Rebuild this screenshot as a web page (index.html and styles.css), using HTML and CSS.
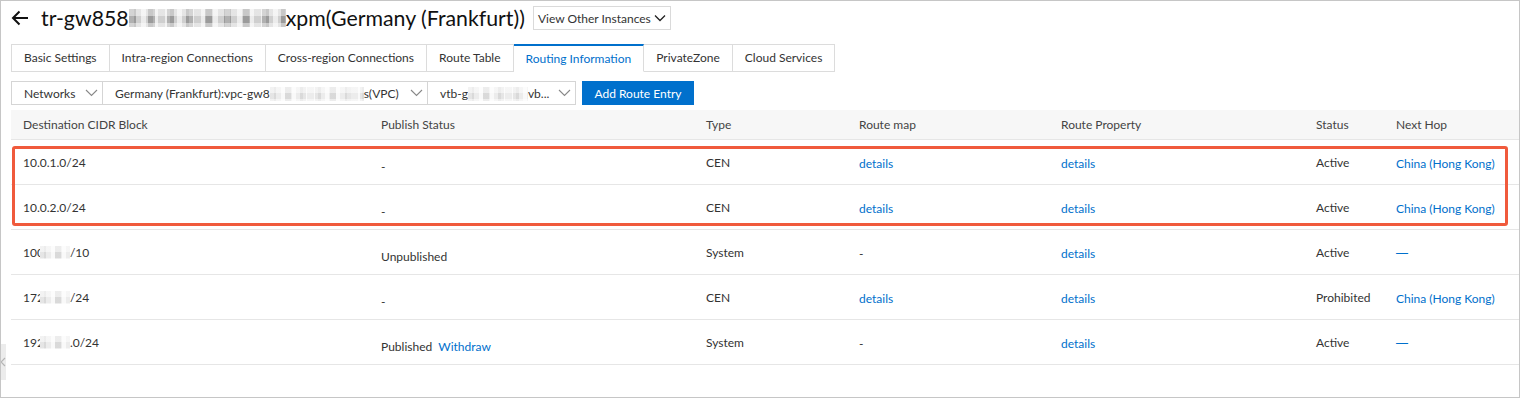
FILE: index.html
```html
<!DOCTYPE html>
<html>
<head>
  <meta charset="UTF-8">
  <meta name="viewport" content="width=device-width, initial-scale=1">
  <link rel="stylesheet" href="styles.css">
</head>
<body>
  <div class="frame">
    <div class="head">
      <svg class="back" width="18" height="16" viewBox="0 0 18 16"><path d="M17 8H2M8.5 1.5L2 8l6.5 6.5" fill="none" stroke="#111" stroke-width="2"/></svg>
      <h1 class="title">tr-gw858<span class="blur blur-title"></span>xpm(Germany (Frankfurt))</h1>
      <div class="switch">View Other Instances
        <svg width="12" height="8" viewBox="0 0 12 8"><polyline points="1,1.5 6,6.5 11,1.5" fill="none" stroke="#222" stroke-width="1.3"/></svg>
      </div>
    </div>

    <div class="tabs">
      <div class="tab">Basic Settings</div>
      <div class="tab">Intra-region Connections</div>
      <div class="tab">Cross-region Connections</div>
      <div class="tab">Route Table</div>
      <div class="tab active">Routing Information</div>
      <div class="tab">PrivateZone</div>
      <div class="tab">Cloud Services</div>
    </div>

    <div class="toolbar">
      <div class="select sel-net">
        <span>Networks</span>
        <svg width="13" height="8" viewBox="0 0 13 8"><polyline points="1,1 6.5,6.5 12,1" fill="none" stroke="#888" stroke-width="1.1"/></svg>
      </div>
      <div class="select sel-vpc">
        <span>Germany (Frankfurt):vpc-gw8<span class="blur blur-light blur-sel"></span>s(VPC)</span>
        <svg width="13" height="8" viewBox="0 0 13 8"><polyline points="1,1 6.5,6.5 12,1" fill="none" stroke="#888" stroke-width="1.1"/></svg>
      </div>
      <div class="select sel-vtb">
        <span>vtb-g<span class="blur blur-light blur-vtb"></span>vb...</span>
        <svg width="13" height="8" viewBox="0 0 13 8"><polyline points="1,1 6.5,6.5 12,1" fill="none" stroke="#888" stroke-width="1.1"/></svg>
      </div>
      <button class="add-button">Add Route Entry</button>
    </div>

    <table class="routes">
      <colgroup>
        <col style="width:358px"><col style="width:325px"><col style="width:153px"><col style="width:202px"><col style="width:255px"><col style="width:80px"><col>
      </colgroup>
      <thead>
        <tr>
          <th>Destination CIDR Block</th>
          <th>Publish Status</th>
          <th>Type</th>
          <th>Route map</th>
          <th>Route Property</th>
          <th>Status</th>
          <th>Next Hop</th>
        </tr>
      </thead>
      <tbody>
        <tr>
          <td>10.0.1.0/24</td>
          <td class="pub">-</td>
          <td>CEN</td>
          <td class="lk"><a href="#">details</a></td>
          <td class="lk"><a href="#">details</a></td>
          <td>Active</td>
          <td class="lk"><a href="#">China (Hong Kong)</a></td>
        </tr>
        <tr>
          <td>10.0.2.0/24</td>
          <td class="pub">-</td>
          <td>CEN</td>
          <td class="lk"><a href="#">details</a></td>
          <td class="lk"><a href="#">details</a></td>
          <td>Active</td>
          <td class="lk"><a href="#">China (Hong Kong)</a></td>
        </tr>
        <tr>
          <td>100<span class="blur blur-light blur-cell"></span>/10</td>
          <td class="pub">Unpublished</td>
          <td>System</td>
          <td class="lk">-</td>
          <td class="lk"><a href="#">details</a></td>
          <td>Active</td>
          <td><span class="none">—</span></td>
        </tr>
        <tr>
          <td>172<span class="blur blur-light blur-cell"></span>/24</td>
          <td class="pub">-</td>
          <td>CEN</td>
          <td class="lk"><a href="#">details</a></td>
          <td class="lk"><a href="#">details</a></td>
          <td>Prohibited</td>
          <td class="lk"><a href="#">China (Hong Kong)</a></td>
        </tr>
        <tr>
          <td>192<span class="blur blur-light blur-cell"></span>.0/24</td>
          <td class="pub">Published <a href="#" class="withdraw">Withdraw</a></td>
          <td>System</td>
          <td class="lk">-</td>
          <td class="lk"><a href="#">details</a></td>
          <td>Active</td>
          <td><span class="none">—</span></td>
        </tr>
      </tbody>
    </table>

    <!-- annotation round the two CEN routes -->
    <div class="highlight"></div>
    <div class="side-toggle">
      <svg width="6" height="10" viewBox="0 0 6 10"><polyline points="5,1 1,5 5,9" fill="none" stroke="#b5b5b5" stroke-width="1.2"/></svg>
    </div>
  </div>
</body>
</html>
```

FILE: styles.css
```css
html, body {
  margin: 0;
  padding: 0;
}

body {
  font-family: Lato, "Liberation Sans", sans-serif;
  font-size: 12px;
  color: #333;
}

a {
  color: #0070cc;
  text-decoration: none;
}

.frame {
  position: relative;
  height: 398px;
  box-sizing: border-box;
  border: 1px solid #c6c6c6;
  padding-left: 10px;
  overflow: hidden;
  background-color: #fff;
}

.head {
  display: flex;
  align-items: center;
  height: 34px;
}

.back {
  margin-right: 12px;
}

.title {
  margin: 0;
  font-size: 21.3px;
  font-weight: normal;
  color: #111;
  display: flex;
  align-items: center;
}

.switch {
  display: flex;
  align-items: center;
  gap: 3px;
  height: 22px;
  margin-left: 8px;
  padding: 0 4px;
  border: 1px solid #dadada;
  color: #333;
}

/* pixelated masking used in the screenshot */
.blur {
  display: inline-block;
  background-color: #cfcfcf;
  background-image:
    repeating-linear-gradient(180deg, rgba(255, 255, 255, 0.45) 0 7px, transparent 7px 14px),
    repeating-linear-gradient(90deg, rgba(0, 0, 0, 0.25) 0 7px, transparent 7px 19px),
    repeating-linear-gradient(90deg, rgba(255, 255, 255, 0.6) 0 5px, transparent 5px 12px);
}

.blur-title {
  width: 157px;
  height: 18px;
}

.blur-light {
  background-color: #ececec;
  background-image:
    repeating-linear-gradient(180deg, rgba(255, 255, 255, 0.5) 0 6px, transparent 6px 12px),
    repeating-linear-gradient(90deg, rgba(0, 0, 0, 0.08) 0 6px, transparent 6px 15px),
    repeating-linear-gradient(90deg, rgba(255, 255, 255, 0.7) 0 4px, transparent 4px 11px);
}

.blur-sel {
  width: 94px;
  height: 14px;
  vertical-align: -3px;
}

.blur-vtb {
  width: 60px;
  height: 14px;
  vertical-align: -3px;
}

.blur-cell {
  width: 30px;
  height: 13px;
  margin-left: -4px;
  vertical-align: -2px;
}

.tabs {
  display: flex;
  margin-top: 9px;
}

.tab {
  height: 26px;
  line-height: 26px;
  padding: 0 12px;
  border: 1px solid #dcdcdc;
  border-left: none;
  color: #333;
}

.tab:first-child {
  border-left: 1px solid #dcdcdc;
}

.tab.active {
  height: 25px;
  border-top: 2px solid #0070cc;
  border-bottom-color: #fff;
  color: #0070cc;
}

.toolbar {
  display: flex;
  margin-top: 9px;
}

.select {
  display: flex;
  align-items: center;
  justify-content: space-between;
  height: 22px;
  box-sizing: content-box;
  padding: 0 4px 0 12px;
  border: 1px solid #d5d5d5;
  border-left: none;
  white-space: nowrap;
}

.select:first-child {
  border-left: 1px solid #d5d5d5;
}

.sel-net {
  width: 74px;
}

.sel-vpc {
  width: 308px;
}

.sel-vtb {
  width: 131px;
}

.add-button {
  margin-left: 6px;
  width: 112px;
  height: 24px;
  border: none;
  background-color: #0070cc;
  color: #fff;
  font-family: inherit;
  font-size: 12px;
  padding: 0;
}

.routes {
  width: 100%;
  margin-top: 5px;
  border-collapse: collapse;
  table-layout: fixed;
}

.routes th {
  height: 29px;
  padding: 0 0 0 12px;
  background-color: #f7f7f7;
  border-bottom: 1px solid #e6e6e6;
  text-align: left;
  font-weight: normal;
  color: #444;
}

.routes tbody tr {
  height: 45px;
}

.routes td {
  padding: 15px 0 0 12px;
  vertical-align: top;
  line-height: 16px;
  border-bottom: 1px solid #e6e6e6;
  white-space: nowrap;
}

.routes td.pub {
  padding-top: 19px;
}

.routes td.lk {
  padding-top: 16px;
}

.withdraw {
  margin-left: 3px;
}

.none {
  font-family: "Liberation Sans", sans-serif;
  color: #0070cc;
}

.highlight {
  position: absolute;
  left: 11px;
  top: 145px;
  width: 1496px;
  height: 80px;
  box-sizing: border-box;
  border: 3px solid #f05a3c;
  border-radius: 3px;
}

.side-toggle {
  position: absolute;
  left: -1px;
  top: 343px;
  width: 6px;
  height: 36px;
  background-color: #ececec;
  display: flex;
  align-items: center;
  justify-content: center;
}
```
